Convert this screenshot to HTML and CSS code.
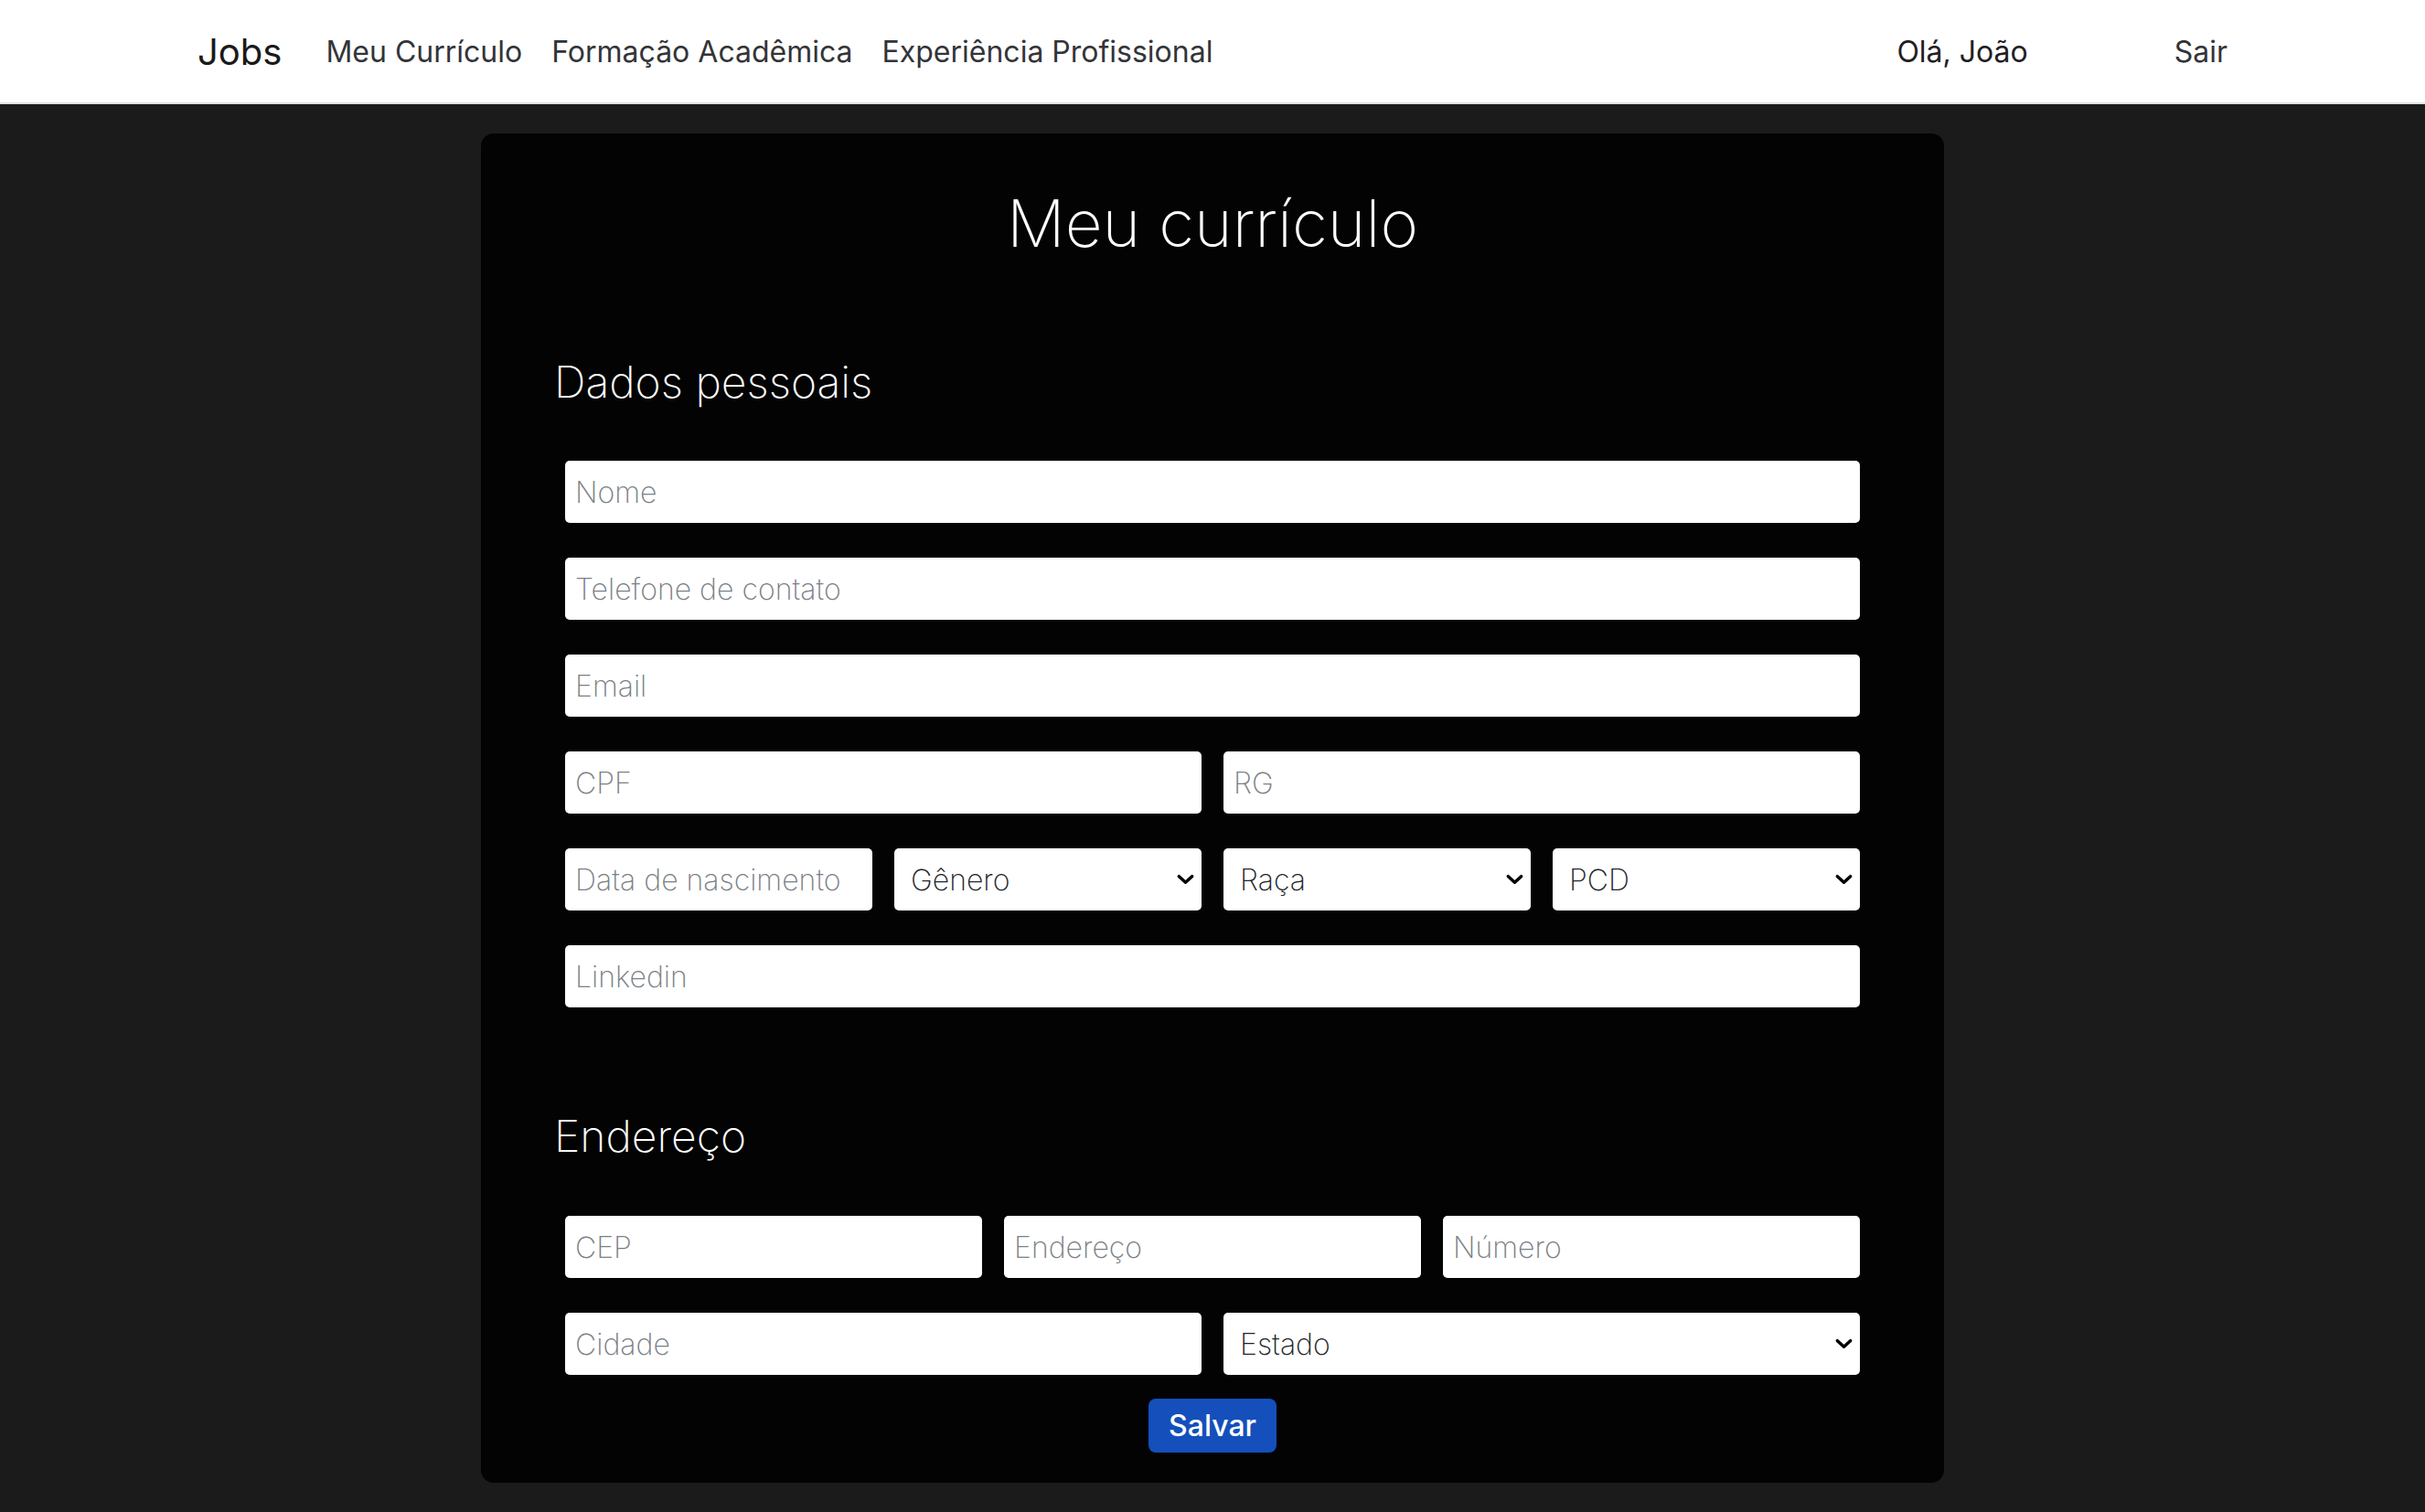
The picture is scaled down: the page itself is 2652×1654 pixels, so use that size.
FILE: index.html
```html
<!DOCTYPE html>
<html lang="pt-BR">
<head>
<meta charset="utf-8">
<title>Meu currículo</title>
<link rel="stylesheet" href="styles.css">
</head>
<body>
<header class="navbar">
  <nav class="nav-inner">
    <a class="brand" href="#">Jobs</a>
    <ul class="nav-links">
      <li><a class="nav-link" href="#">Meu Currículo</a></li>
      <li><a class="nav-link" href="#">Formação Acadêmica</a></li>
      <li><a class="nav-link" href="#">Experiência Profissional</a></li>
    </ul>
    <div class="nav-right">
      <span class="greeting">Olá, João</span>
      <a class="nav-link" href="#">Sair</a>
    </div>
  </nav>
</header>

<main class="page">
  <section class="card">
    <h1 class="title">Meu currículo</h1>

    <h2 class="section-title">Dados pessoais</h2>
    <div class="fields">
      <input class="field" type="text" placeholder="Nome">
      <input class="field" type="text" placeholder="Telefone de contato">
      <input class="field" type="text" placeholder="Email">
      <div class="row row-2">
        <input class="field" type="text" placeholder="CPF">
        <input class="field" type="text" placeholder="RG">
      </div>
      <div class="row row-4">
        <input class="field" type="text" placeholder="Data de nascimento">
        <div class="select-wrap">
          <select class="field select"><option>Gênero</option></select>
          <svg class="chevron" viewBox="0 0 20 12" aria-hidden="true"><path d="M2.5 2.5 L10 9.5 L17.5 2.5" fill="none" stroke="#000" stroke-width="3.6" stroke-linecap="round" stroke-linejoin="round"/></svg>
        </div>
        <div class="select-wrap">
          <select class="field select"><option>Raça</option></select>
          <svg class="chevron" viewBox="0 0 20 12" aria-hidden="true"><path d="M2.5 2.5 L10 9.5 L17.5 2.5" fill="none" stroke="#000" stroke-width="3.6" stroke-linecap="round" stroke-linejoin="round"/></svg>
        </div>
        <div class="select-wrap">
          <select class="field select"><option>PCD</option></select>
          <svg class="chevron" viewBox="0 0 20 12" aria-hidden="true"><path d="M2.5 2.5 L10 9.5 L17.5 2.5" fill="none" stroke="#000" stroke-width="3.6" stroke-linecap="round" stroke-linejoin="round"/></svg>
        </div>
      </div>
      <input class="field" type="text" placeholder="Linkedin">
    </div>

    <h2 class="section-title section-title--second">Endereço</h2>
    <div class="fields">
      <div class="row row-3">
        <input class="field" type="text" placeholder="CEP">
        <input class="field" type="text" placeholder="Endereço">
        <input class="field" type="text" placeholder="Número">
      </div>
      <div class="row row-2">
        <input class="field" type="text" placeholder="Cidade">
        <div class="select-wrap">
          <select class="field select"><option>Estado</option></select>
          <svg class="chevron" viewBox="0 0 20 12" aria-hidden="true"><path d="M2.5 2.5 L10 9.5 L17.5 2.5" fill="none" stroke="#000" stroke-width="3.6" stroke-linecap="round" stroke-linejoin="round"/></svg>
        </div>
      </div>
    </div>

    <div class="actions">
      <button class="btn-save" type="button">Salvar</button>
    </div>
  </section>
</main>
</body>
</html>
```

FILE: styles.css
```css
* {
  box-sizing: border-box;
}

html, body {
  margin: 0;
  padding: 0;
}

body {
  background: #1c1b1c;
  font-family: Inter, "Noto Sans", "Liberation Sans", sans-serif;
  color: #212529;
}

a {
  text-decoration: none;
}

/* ---------- navbar ---------- */
.navbar {
  background: #ffffff;
  border-bottom: 2px solid #dfe1e4;
}

.nav-inner {
  height: 112px;
  display: flex;
  align-items: center;
  padding: 0 200px 0 216px;
}

.brand {
  font-size: 40px;
  font-weight: 400;
  color: #1a1a1a;
  margin-right: 32px;
}

.nav-links {
  display: flex;
  list-style: none;
  margin: 0;
  padding: 0;
}

.nav-link {
  display: block;
  padding: 0 16px;
  font-size: 32px;
  font-weight: 400;
  color: #333438;
}

.nav-right {
  margin-left: auto;
  display: flex;
  align-items: center;
}

.greeting {
  font-size: 32px;
  color: #1f2023;
  margin-right: 144px;
}

/* ---------- page / card ---------- */
.page {
  padding: 32px 0;
}

.card {
  width: 1600px;
  margin: 0 auto;
  background: #030303;
  border-radius: 14px;
  padding: 55px 77px 33px;
}

.title {
  margin: 0;
  text-align: center;
  color: #ffffff;
  font-size: 71px;
  line-height: 86px;
  font-weight: 200;
}

.section-title {
  margin: 102px 0 57px;
  padding-left: 3px;
  color: #ffffff;
  font-size: 48px;
  line-height: 58px;
  font-weight: 200;
}

.section-title--second {
  margin: 112px 0 58px;
}

/* ---------- form ---------- */
.fields {
  display: flex;
  flex-direction: column;
  gap: 38px;
  margin: 0 15px;
}

.row {
  display: grid;
  gap: 24px;
}

.row-2 {
  grid-template-columns: 1fr 1fr;
}

.row-3 {
  grid-template-columns: 1fr 1fr 1fr;
}

.row-4 {
  grid-template-columns: 1fr 1fr 1fr 1fr;
}

.field {
  display: block;
  width: 100%;
  height: 68px;
  border: none;
  border-radius: 5px;
  background: #ffffff;
  padding: 0 11px;
  font-family: Inter, "Noto Sans", "Liberation Sans", sans-serif;
  font-size: 32px;
  font-weight: 250;
  color: #212529;
  outline: none;
}

.field::placeholder {
  color: #7a8086;
  opacity: 1;
}

.select-wrap {
  position: relative;
}

.select {
  appearance: none;
  -webkit-appearance: none;
  padding-left: 18px;
  padding-right: 40px;
}

.chevron {
  position: absolute;
  right: 8px;
  top: 50%;
  width: 19px;
  height: 12px;
  margin-top: -6px;
  pointer-events: none;
}

.actions {
  display: flex;
  justify-content: center;
  margin-top: 26px;
}

.btn-save {
  background: #144fbb;
  color: #ffffff;
  border: none;
  border-radius: 8px;
  padding: 10px 22px;
  font-family: Inter, "Noto Sans", "Liberation Sans", sans-serif;
  font-size: 32px;
  line-height: 39px;
  font-weight: 500;
  cursor: pointer;
}
```
